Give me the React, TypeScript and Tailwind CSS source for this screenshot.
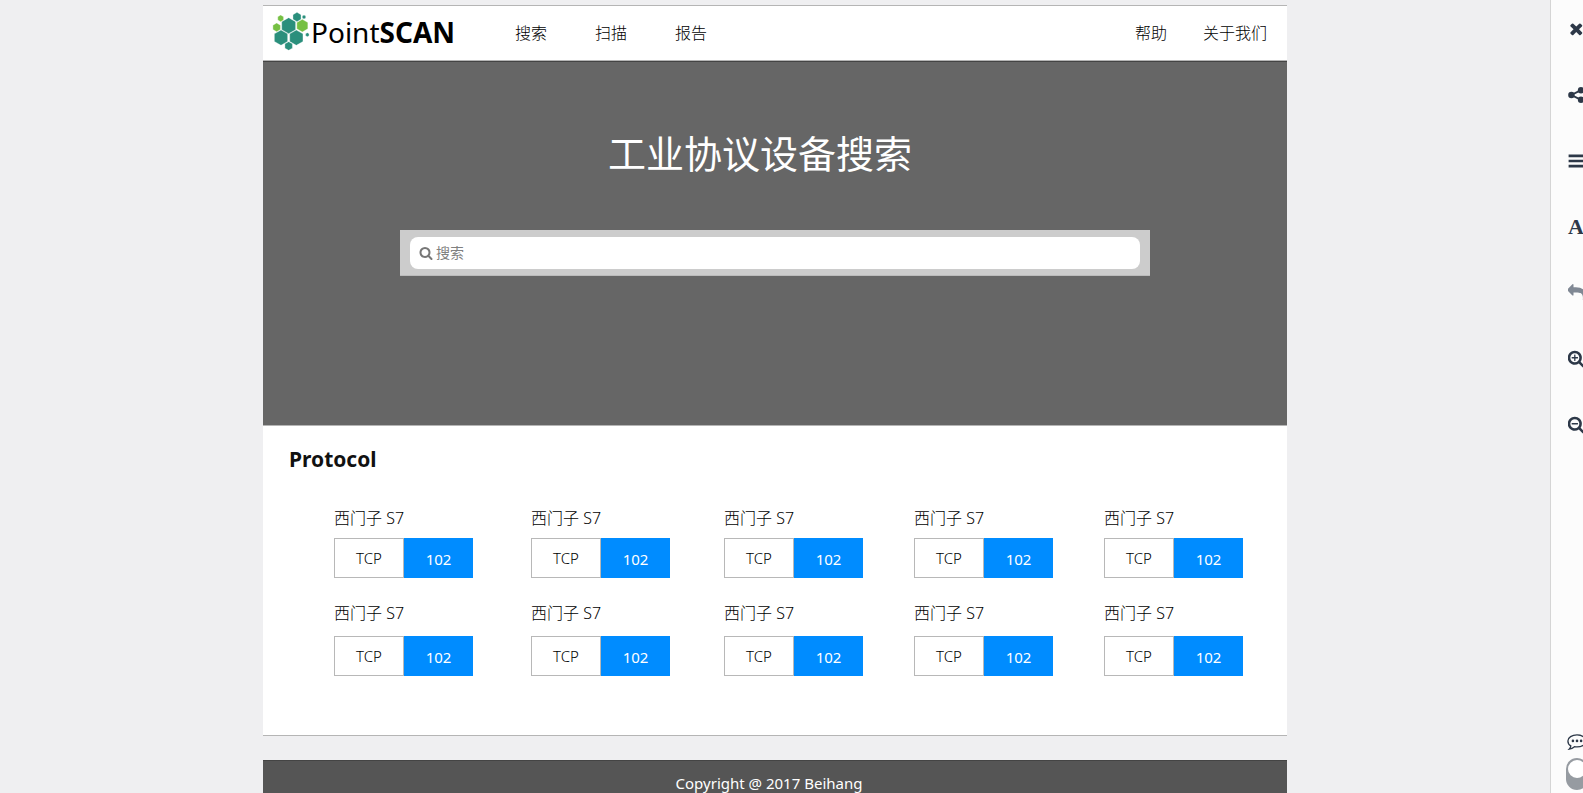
import type { ReactNode } from 'react';

const RING =
  'M1216 832q0-185-131.5-316.5t-316.5-131.5-316.5 131.5-131.5 316.5 131.5 316.5 316.5 131.5 316.5-131.5 131.5-316.5zm512 832q0 53-37.5 90.5t-90.5 37.5q-54 0-90-38l-343-342q-179 124-399 124-143 0-273.5-55.5t-225-150-150-225-55.5-273.5 55.5-273.5 150-225 225-150 273.5-55.5 273.5 55.5 225 150 150 225 55.5 273.5q0 220-124 399l343 343q37 37 37 90z';
const PLUS =
  'M1088 800v64q0 13-9.5 22.5t-22.5 9.5h-224v224q0 13-9.5 22.5t-22.5 9.5h-64q-13 0-22.5-9.5t-9.5-22.5v-224h-224q-13 0-22.5-9.5t-9.5-22.5v-64q0-13 9.5-22.5t22.5-9.5h224v-224q0-13 9.5-22.5t22.5-9.5h64q13 0 22.5 9.5t9.5 22.5v224h224q13 0 22.5 9.5t9.5 22.5z';
const MINUS =
  'M1088 800v64q0 13-9.5 22.5t-22.5 9.5h-576q-13 0-22.5-9.5t-9.5-22.5v-64q0-13 9.5-22.5t22.5-9.5h576q13 0 22.5 9.5t9.5 22.5z';
const CROSS =
  'M1298 1322q0 40-28 68l-136 136q-28 28-68 28t-68-28l-294-294-294 294q-28 28-68 28t-68-28l-136-136q-28-28-28-68t28-68l294-294-294-294q-28-28-28-68t28-68l136-136q28-28 68-28t68 28l294 294 294-294q28-28 68-28t68 28l136 136q28 28 28 68t-28 68l-294 294 294 294q28 28 28 68z';
const ARROW =
  'M1792 640q0 26-19 45l-512 512q-19 19-45 19t-45-19-19-45v-256h-224q-98 0-175.5 6t-154 21.5-133 42.5-105.5 69.5-80 101-48.5 138.5-17.5 181q0 55 5 123 0 6 2.5 23.5t2.5 26.5q0 15-8.5 25t-23.5 10q-16 0-28-17-7-9-13-22t-13.5-30-10.5-24q-127-285-127-451 0-199 53-333 162-403 875-403h224v-256q0-26 19-45t45-19 45 19l512 512q19 19 19 45z';

function Icon({ children, className = 'size-[18px]' }: { children: ReactNode; className?: string }) {
  return (
    <svg viewBox="0 0 1792 1792" fill="currentColor" aria-hidden="true" className={className}>
      {children}
    </svg>
  );
}

const hexagons: [number, number, number, string][] = [
  [100, 77, 24, '#2a8f7c'],
  [77, 113, 23, '#2a8f7c'],
  [123, 113, 23, '#2a8f7c'],
  [100, 138, 13, '#2a8f7c'],
  [141, 77, 19, '#76c043'],
  [125, 51, 14, '#2a8f7c'],
  [76, 55, 10, '#76c043'],
  [64, 82, 13, '#76c043'],
  [146, 51, 6, '#2a8f7c'],
  [156, 104, 6, '#2a8f7c'],
];

function hexPoints(x: number, y: number, r: number) {
  return [0, 1, 2, 3, 4, 5]
    .map((i) => {
      const a = (Math.PI / 3) * i + Math.PI / 6;
      return `${(x + r * Math.cos(a)).toFixed(1)},${(y + r * Math.sin(a)).toFixed(1)}`;
    })
    .join(' ');
}

function Logo() {
  return (
    <a href="#" className="flex items-center pb-[3px] text-black">
      <svg viewBox="50 36 114 117" className="h-[39px] w-[38px]" aria-hidden="true">
        {hexagons.map(([x, y, r, fill]) => (
          <polygon key={`${x}-${y}`} points={hexPoints(x, y, r)} fill={fill} stroke="#fff" strokeWidth="1" />
        ))}
      </svg>
      <span className="pl-px text-[28px] leading-8">
        Point<b>SCAN</b>
      </span>
    </a>
  );
}

const tools: { label: string; muted?: boolean; icon: ReactNode }[] = [
  { label: '关闭', icon: <Icon><path transform="translate(120 -30)" d={CROSS} /></Icon> },
  {
    label: '分享',
    icon: (
      <Icon>
        <circle cx="340" cy="896" r="320" />
        <circle cx="1300" cy="416" r="320" />
        <circle cx="1300" cy="1376" r="320" />
        <path d="M1300 416L340 896l960 480" fill="none" stroke="currentColor" strokeWidth="190" />
      </Icon>
    ),
  },
  {
    label: '菜单',
    icon: (
      <Icon>
        <path d="M60 250h1600v270H60zM60 760h1600v270H60zM60 1270h1600v270H60z" />
      </Icon>
    ),
  },
  { label: '文字', icon: <span className="block font-['Liberation_Serif',serif] text-[22px] leading-[18px] font-bold">A</span> },
  { label: '撤销', muted: true, icon: <Icon><path transform="translate(1700 -60) scale(-1 1)" d={ARROW} /></Icon> },
  { label: '放大', icon: <Icon><path transform="translate(-90 -60)" d={PLUS} /><path transform="translate(-90 -60)" d={RING} /></Icon> },
  { label: '缩小', icon: <Icon><path transform="translate(-90 -60)" d={MINUS} /><path transform="translate(-90 -60)" d={RING} /></Icon> },
];

function Toolbar() {
  return (
    <aside className="flex h-full w-[33px] shrink-0 flex-col justify-between overflow-hidden border-l border-[#d5d5d5] bg-[#fcfcfc] text-[#2d3848]">
      <div className="flex flex-col items-start gap-12 pt-5 pl-[17px]">
        {tools.map((t) => (
          <button key={t.label} type="button" aria-label={t.label} className={t.muted ? 'h-[18px] text-[#808894]' : 'h-[18px]'}>
            {t.icon}
          </button>
        ))}
      </div>
      <div className="flex flex-col items-start gap-2 pb-[3px] pl-[15px]">
        <button type="button" aria-label="评论" className="ml-px">
          <svg viewBox="0 0 20 16" className="h-4 w-5" fill="none" stroke="currentColor" strokeWidth="1.3" aria-hidden="true">
            <path d="M10 .9c5 0 8.9 2.6 8.9 6s-3.900 6-8.900 6c-.9 0-1.700-.1-2.500-.2C6 14 4.300 14.900 2.200 15.200c.9-.9 1.500-2 1.600-3.300C2 10.800.9 8.900.9 6.900c0-3.400 4.100-6 9.100-6z" />
            <g fill="currentColor" stroke="none">
              <circle cx="5.900" cy="6.900" r="1.300" />
              <circle cx="10" cy="6.900" r="1.300" />
              <circle cx="14.100" cy="6.900" r="1.300" />
            </g>
          </svg>
        </button>
        <button type="button" role="switch" aria-checked="false" aria-label="切换" className="flex h-8 w-[22px] items-start rounded-full bg-[#969ba1] p-0.5">
          <span className="size-[18px] shrink-0 rounded-full bg-white" />
        </button>
      </div>
    </aside>
  );
}

function Protocol({ tight }: { tight: boolean }) {
  return (
    <div>
      <h3 className={tight ? 'mb-2 text-base leading-6 font-light' : 'mb-[11px] text-base leading-6 font-light'}>
        西门子 S7
      </h3>
      <div className="flex">
        <button type="button" className="h-10 w-[70px] border border-[#b8b8b8] text-[15px] font-light">TCP</button>
        <button type="button" className="h-10 w-[69px] bg-[#008cff] pt-0.5 text-[15px] text-white">102</button>
      </div>
    </div>
  );
}

export default function App() {
  return (
    <div className="flex h-screen overflow-hidden bg-[#efeff1] font-['Noto_Sans','Noto_Sans_CJK_SC',sans-serif] text-black">
      <div className="min-w-0 flex-1 overflow-hidden pt-[5px]">
        <div className="mx-auto max-w-5xl">
          <header className="flex h-14 items-center border-y border-[#b5b5b5] bg-white pr-5 pl-[9px]">
            <Logo />
            <nav className="ml-[60px] flex flex-1 gap-12 text-base font-light">
              <a href="#search">搜索</a>
              <a href="#scan">扫描</a>
              <a href="#report">报告</a>
              <a href="#help" className="ml-auto">帮助</a>
              <a href="#about" className="-ml-3">关于我们</a>
            </nav>
          </header>

          <section id="search" className="flex h-[364px] flex-col items-center border-t border-[#444] bg-[#666] pt-16">
            <h1 className="mr-[30px] text-[38px] leading-[54px] text-white">工业协议设备搜索</h1>
            <form className="mt-[50px] w-full max-w-[750px] border-b border-[#bbb] bg-[#ccc] px-[10px] pt-[7px] pb-[6px]">
              <label className="flex h-8 items-center gap-[3px] rounded-lg bg-white px-[9px] text-[#777]">
                <Icon className="size-[14px] shrink-0"><path d={RING} /></Icon>
                <input type="text" aria-label="搜索" placeholder="搜索" className="w-full text-sm outline-none placeholder:text-[#808080]" />
              </label>
            </form>
          </section>

          <main className="border-y border-[#b5b5b5] bg-white pt-[17px] pb-[59px]">
            <h2 className="pl-[26px] text-[21px] leading-8 font-bold text-[#111]">Protocol</h2>
            <div className="mt-[31px] grid grid-cols-[197fr_193fr_190fr_190fr_183fr] gap-y-[23px] pl-[71px]">
              {Array.from({ length: 10 }, (_, i) => (
                <Protocol key={i} tight={i < 5} />
              ))}
            </div>
          </main>

          <footer className="mt-6 border-t border-[#444] bg-[#555] pt-[10px] pr-3 pb-6 text-center text-[15px] leading-6 text-white">
            Copyright @ 2017 Beihang
          </footer>
        </div>
      </div>
      <Toolbar />
    </div>
  );
}
